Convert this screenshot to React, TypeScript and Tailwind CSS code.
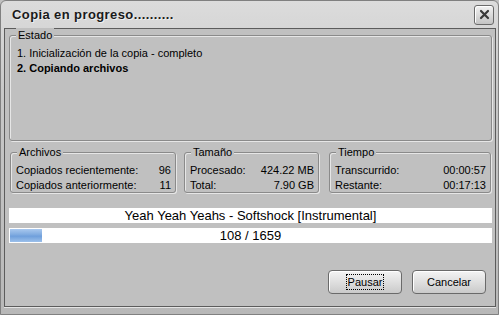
import React from "react";

const font = { fontFamily: '"Liberation Sans", Arial, sans-serif' };

function Group({ title, className, children }: { title: string; className?: string; children: React.ReactNode }) {
  return (
    <div className={"relative rounded-[3px] border border-[#8a8a8a] shadow-[1px_1px_0_#e6e6e6,inset_1px_1px_0_#e6e6e6] " + (className ?? "")}>
      <div className="absolute left-[6px] top-[-8px] bg-[#c0c0c0] px-[2px] leading-[14px] text-[11px]">{title}</div>
      {children}
    </div>
  );
}

function Row({ label, value }: { label: string; value: string }) {
  return (
    <div className="flex justify-between leading-[15px]">
      <span>{label}</span>
      <span>{value}</span>
    </div>
  );
}

export default function App() {
  return (
    <div className="w-[499px] h-[315px] bg-[#c0c0c0] text-[11px] text-black overflow-hidden" style={font}>
      <div className="w-full h-full flex flex-col rounded-t-[6px] border border-[#808080] pl-[3px] pr-[2px] pb-[7px] bg-[linear-gradient(180deg,#dcdcdc_0%,#c8c8c8_30%,#b8b8b8_100%)]">
        {/* Title bar */}
        <div className="h-[27px] flex items-center justify-between pl-[8px] pr-[2px] shrink-0">
          <span className="text-[13px] font-bold text-[#1a1a1a] tracking-[0.4px] [text-shadow:1px_1px_0_#f0f0f0]">Copia en progreso..........</span>
          <div className="w-[20px] h-[20px] rounded-[3px] border border-[#6a6a6a] bg-[linear-gradient(180deg,#f2f2f2,#c4c4c4)] flex items-center justify-center shadow-[inset_1px_1px_0_#ffffff]">
            <svg width="11" height="11" viewBox="0 0 11 11">
              <path d="M2 2 L9 9 M9 2 L2 9" stroke="#3a3a3a" strokeWidth="2.2" strokeLinecap="round" />
            </svg>
          </div>
        </div>
        {/* Client area */}
        <div className="flex-1 border border-[#5c5c5c] bg-[#c0c0c0] flex flex-col pl-[4px] pr-[3px] pt-[6px] pb-[12px] shadow-[0_1px_0_#e4e4e4]">
          <Group title="Estado" className="h-[106px] pt-[10px] pl-[7px] pr-[7px]">
            <div className="leading-[15px]">1. Inicialización de la copia - completo</div>
            <div className="leading-[15px] font-bold">2. Copiando archivos</div>
          </Group>
          <div className="flex mt-[11px]">
            <Group title="Archivos" className="ml-[1px] w-[166px] h-[41px] pt-[10px] pl-[5px] pr-[4px]">
              <Row label="Copiados recientemente:" value="96" />
              <Row label="Copiados anteriormente:" value="11" />
            </Group>
            <Group title="Tamaño" className="ml-[8px] w-[135px] h-[41px] pt-[10px] pl-[5px] pr-[4px]">
              <Row label="Procesado:" value="424.22 MB" />
              <Row label="Total:" value="7.90 GB" />
            </Group>
            <Group title="Tiempo" className="ml-[10px] flex-1 mr-[1px] h-[41px] pt-[10px] pl-[5px] pr-[4px]">
              <Row label="Transcurrido:" value="00:00:57" />
              <Row label="Restante:" value="00:17:13" />
            </Group>
          </div>
          <div className="mt-[15px] h-[15px] bg-white text-center leading-[15px] text-[13px]">Yeah Yeah Yeahs - Softshock [Instrumental]</div>
          <div className="relative mt-[5px] h-[15px] bg-white text-center leading-[15px] text-[13px]">
            <div className="absolute left-[1px] top-[1px] h-[13px] w-[32px] bg-[linear-gradient(180deg,#a9c8ee_0%,#7eaae0_45%,#6f9fdc_55%,#9cc0ea_100%)]" />
            <span className="relative">108 / 1659</span>
          </div>
          <div className="flex-1" />
          <div className="flex justify-end gap-[10px] pr-[6px]">
            <button className="w-[74px] h-[24px] rounded-[4px] border border-[#6a6a6a] bg-[linear-gradient(180deg,#f4f4f4,#cacaca)] shadow-[inset_1px_1px_0_#ffffff] flex items-center justify-center">
              <span className="outline outline-1 outline-dotted outline-black px-[1px] leading-[14px]">Pausar</span>
            </button>
            <button className="w-[74px] h-[24px] rounded-[4px] border border-[#6a6a6a] bg-[linear-gradient(180deg,#f4f4f4,#cacaca)] shadow-[inset_1px_1px_0_#ffffff]">Cancelar</button>
          </div>
        </div>
      </div>
    </div>
  );
}
